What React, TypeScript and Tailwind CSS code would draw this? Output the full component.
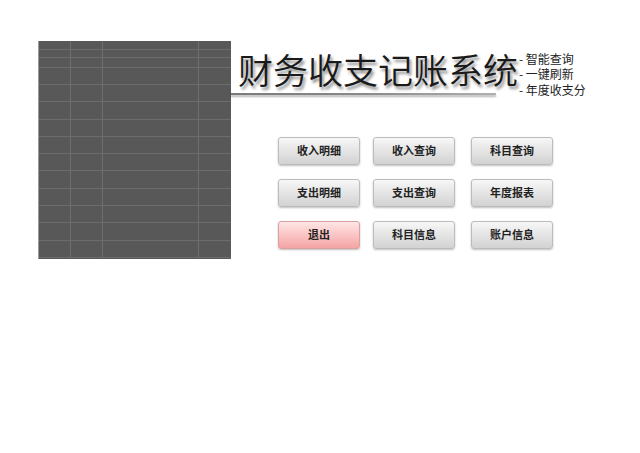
import React from "react";

const cjk = "font-['Noto_Sans_CJK_SC','Noto_Sans',sans-serif]";

const colWidths = [32, 32, 97, 32];
const rowHeights = [9, 8, 9.7, 17.3, 17.3, 17.3, 17.3, 17.3, 17.3, 17.3, 17.3, 17.3, 17.3, 17.3];

const buttons: { label: string; danger?: boolean }[][] = [
    [{ label: "收入明细" }, { label: "收入查询" }, { label: "科目查询" }],
    [{ label: "支出明细" }, { label: "支出查询" }, { label: "年度报表" }],
    [{ label: "退出", danger: true }, { label: "科目信息" }, { label: "账户信息" }],
];

const GridPanel = () => (
    <div className="w-[193px] h-[218px] bg-[#585858] border-l border-l-[#9a9a9a] flex flex-col overflow-hidden shrink-0">
        {rowHeights.map((h, r) => (
            <div key={r} className="flex border-b border-b-[#6c6c6c]" style={{ height: h }}>
                {colWidths.map((w, c) => (
                    <div
                        key={c}
                        className={c < colWidths.length - 1 ? "border-r border-r-[#6e6e6e]" : ""}
                        style={{ width: w }}
                    />
                ))}
            </div>
        ))}
    </div>
);

const MenuButton = ({ label, danger }: { label: string; danger?: boolean }) => (
    <div
        className={
            "w-[82px] h-[28px] rounded-[3px] border flex items-center justify-center text-[11px] font-bold text-[#222] shadow-[0_1px_2px_rgba(0,0,0,0.25)] " +
            cjk +
            (danger
                ? " border-[#d9a0a0] bg-gradient-to-b from-[#fde6e6] to-[#f4a3a3]"
                : " border-[#bcbcbc] bg-gradient-to-b from-[#f7f7f7] to-[#d2d2d2]")
        }
    >
        {label}
    </div>
);

export default function App() {
    return (
        <div className="w-[640px] h-[453px] bg-white flex items-start pt-[41px] pl-[38px]">
            <GridPanel />
            <div className="flex flex-col">
                <div className="flex items-start mt-[7.5px] h-[40px]">
                    <div
                        className={
                            "pl-[7px] text-[35px] leading-[40px] font-[350] text-[#1a1a1a] [text-shadow:2px_3px_3px_rgba(0,0,0,0.45)] whitespace-nowrap " +
                            cjk
                        }
                    >
                        财务收支记账系统
                    </div>
                    <div className={"ml-[1px] mt-[2px] flex flex-col text-[12px] leading-[15.5px] text-[#222] " + cjk}>
                        <span>- 智能查询</span>
                        <span>- 一键刷新</span>
                        <span>- 年度收支分</span>
                    </div>
                </div>
                <div className="mt-[4px] h-[2px] w-[265px] bg-gradient-to-r from-[#7a7a7a] via-[#8a8a8a] to-[#b0b0b0] shadow-[0_2px_2px_rgba(0,0,0,0.3)]" />
                <div className="ml-[47px] mt-[42px] flex flex-col gap-[14px]">
                    {buttons.map((row, i) => (
                        <div key={i} className="flex">
                            <MenuButton {...row[0]} />
                            <div className="ml-[13px]">
                                <MenuButton {...row[1]} />
                            </div>
                            <div className="ml-[16px]">
                                <MenuButton {...row[2]} />
                            </div>
                        </div>
                    ))}
                </div>
            </div>
        </div>
    );
}
